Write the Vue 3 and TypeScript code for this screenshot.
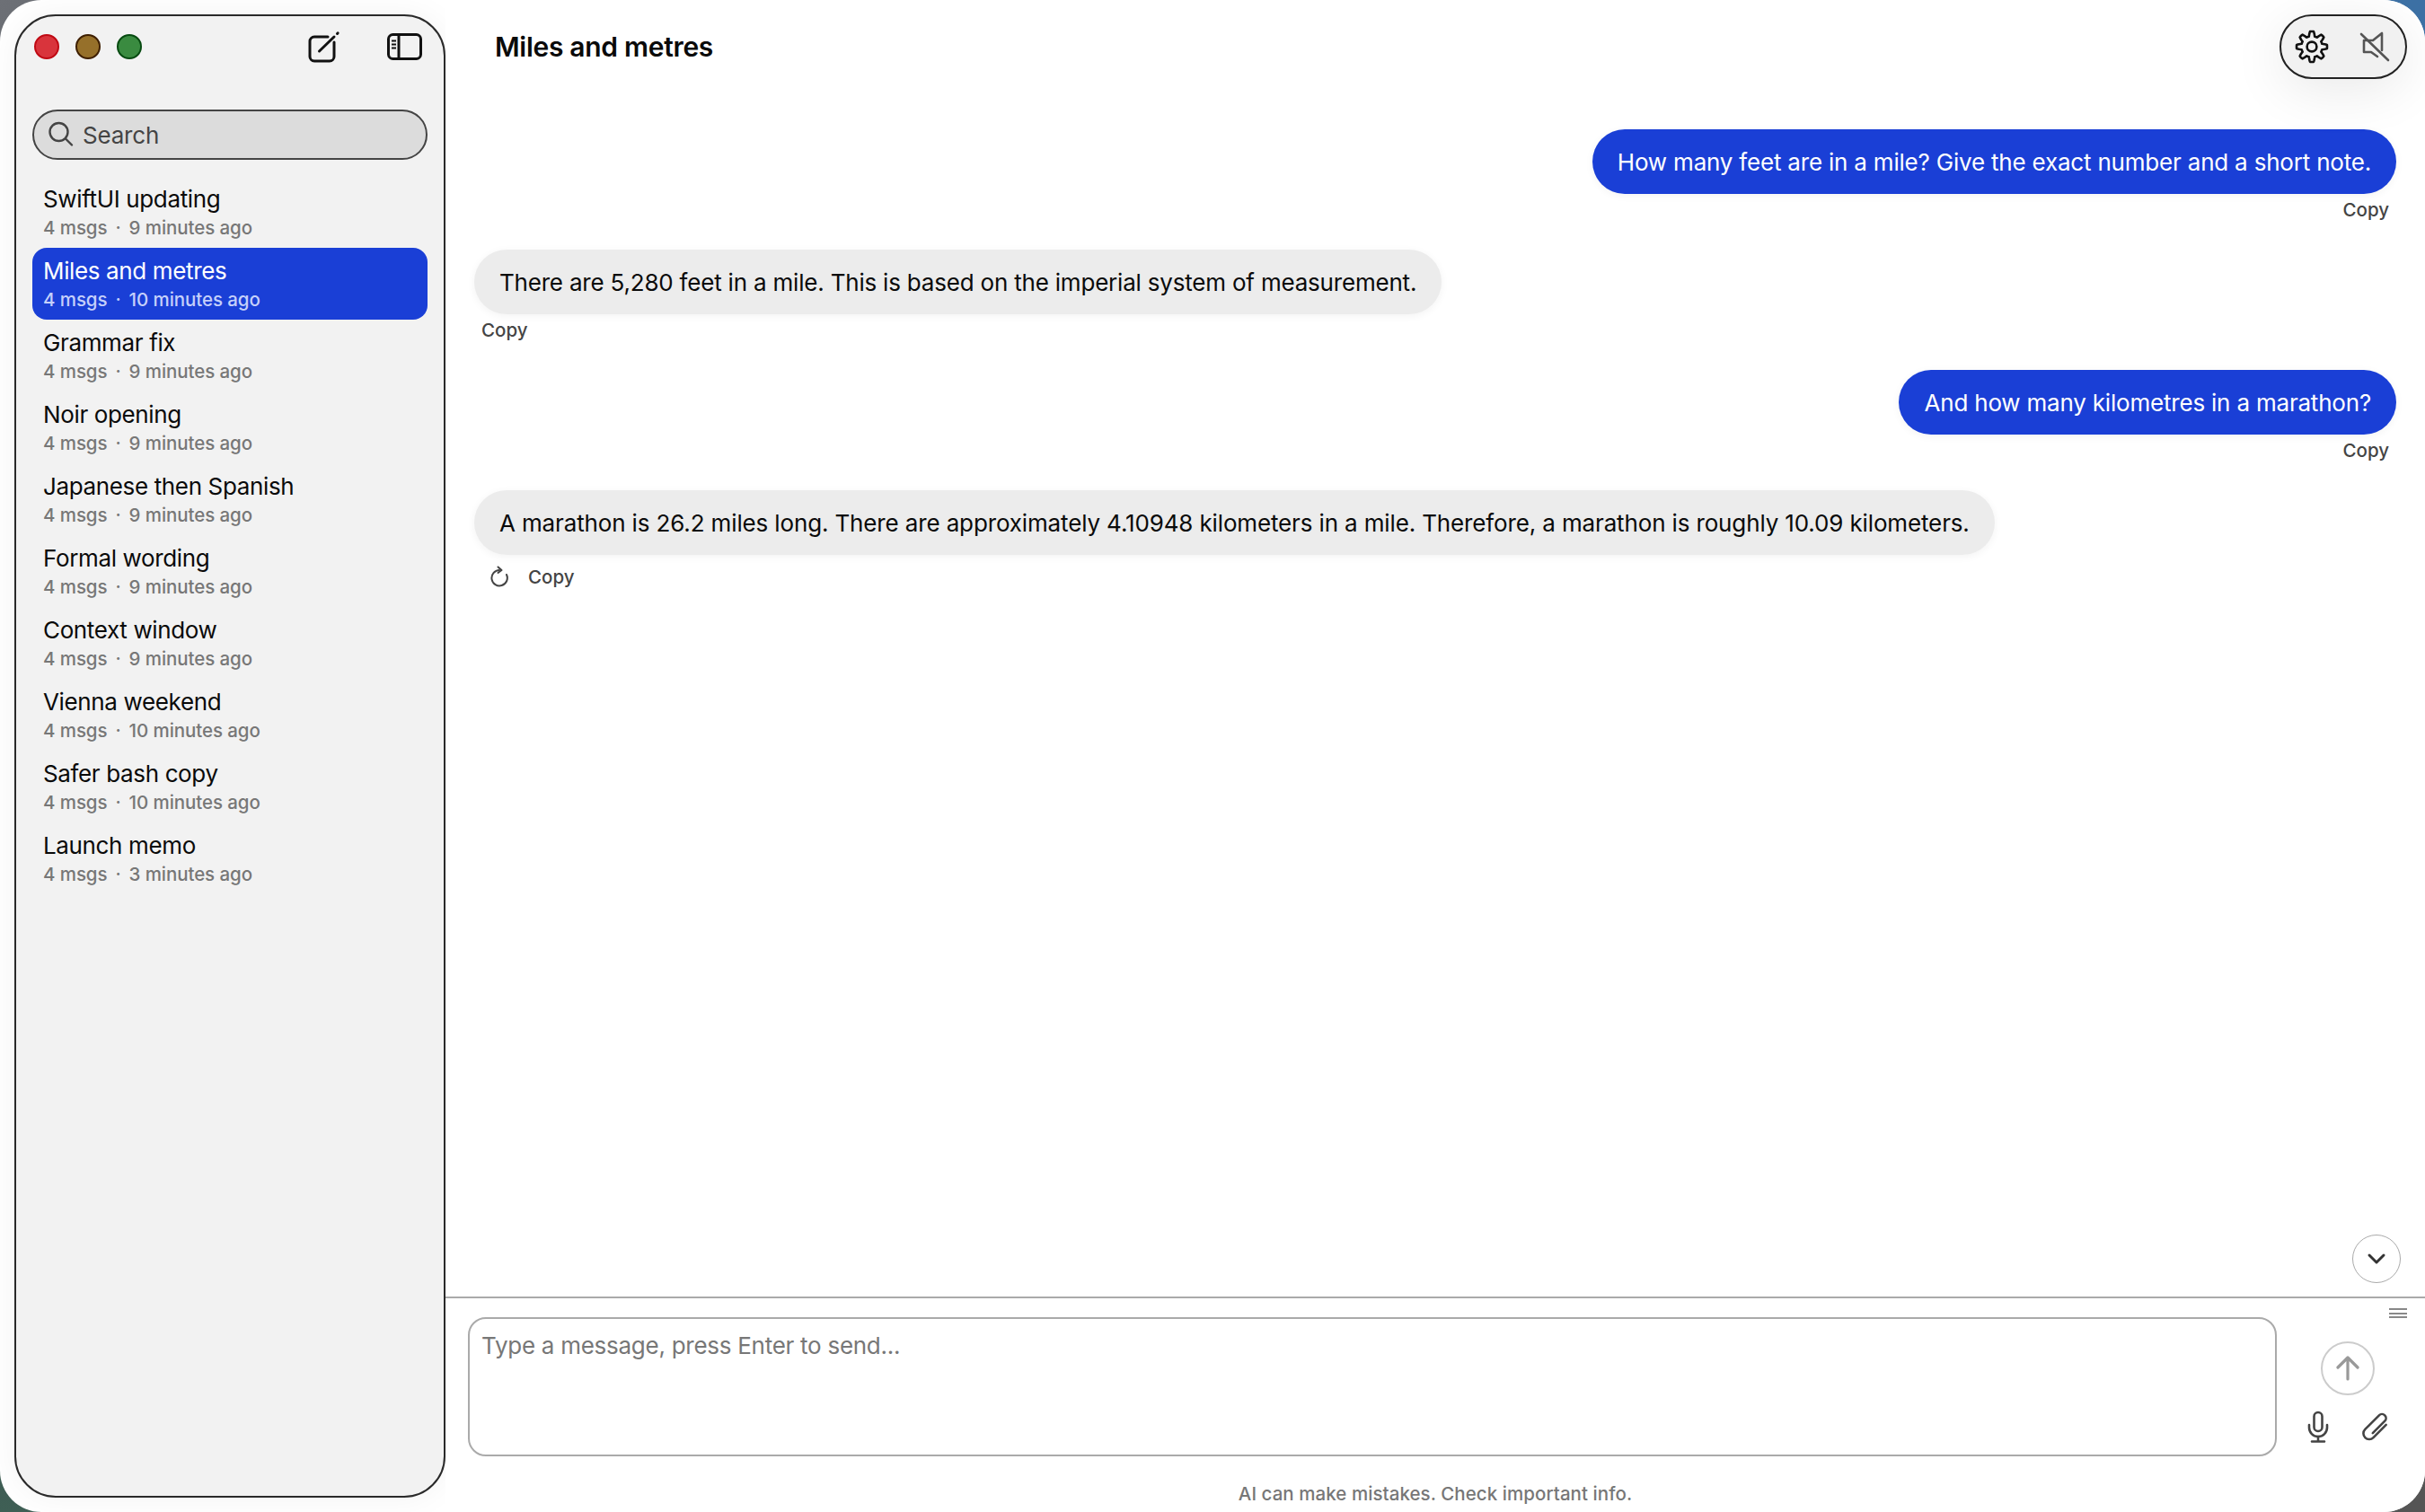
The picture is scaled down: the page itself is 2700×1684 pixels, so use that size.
<script setup lang="ts">
import { computed } from 'vue'

interface Chat { title: string; meta: string; active?: boolean }
interface Msg { role: 'user' | 'bot'; text: string; retry?: boolean }

const chats: Chat[] = [
  { title: 'SwiftUI updating', meta: '9 minutes ago' },
  { title: 'Miles and metres', meta: '10 minutes ago', active: true },
  { title: 'Grammar fix', meta: '9 minutes ago' },
  { title: 'Noir opening', meta: '9 minutes ago' },
  { title: 'Japanese then Spanish', meta: '9 minutes ago' },
  { title: 'Formal wording', meta: '9 minutes ago' },
  { title: 'Context window', meta: '9 minutes ago' },
  { title: 'Vienna weekend', meta: '10 minutes ago' },
  { title: 'Safer bash copy', meta: '10 minutes ago' },
  { title: 'Launch memo', meta: '3 minutes ago' },
]

const messages: Msg[] = [
  { role: 'user', text: 'How many feet are in a mile? Give the exact number and a short note.' },
  { role: 'bot', text: 'There are 5,280 feet in a mile. This is based on the imperial system of measurement.' },
  { role: 'user', text: 'And how many kilometres in a marathon?' },
  { role: 'bot', text: 'A marathon is 26.2 miles long. There are approximately 4.10948 kilometers in a mile. Therefore, a marathon is roughly 10.09 kilometers.', retry: true },
]

const gearPath = computed(() => {
  const pts: string[] = []
  const n = 160
  for (let i = 0; i < n; i++) {
    const a = (i / n) * Math.PI * 2
    const w = Math.cos(8 * a)
    const s = Math.max(-1, Math.min(1, w * 1.7))
    const r = 14.4 + 2.6 * s
    pts.push(`${(20 + r * Math.cos(a)).toFixed(2)} ${(20 + r * Math.sin(a)).toFixed(2)}`)
  }
  return 'M' + pts.join('L') + 'Z'
})
</script>

<template>
  <div class="desktop">
    <div class="window">
      <aside class="sidebar">
        <div class="topbar">
          <div class="lights">
            <span class="light red"></span>
            <span class="light amber"></span>
            <span class="light green"></span>
          </div>
          <div class="top-icons">
            <svg width="40" height="40" viewBox="0 0 40 40" fill="none" stroke="#111" stroke-width="3" stroke-linecap="round">
              <path d="M25 9H10a5 5 0 0 0-5 5v17a5 5 0 0 0 5 5h17a5 5 0 0 0 5-5V15" />
              <path d="M15.5 25L32 9" />
              <path d="M35.5 5.5l.6-.6" />
            </svg>
            <svg width="44" height="36" viewBox="0 0 44 36" fill="none" stroke="#111" stroke-width="3">
              <rect x="4.5" y="4.5" width="36" height="27" rx="5" />
              <path d="M16 4.5v27" />
              <path d="M8 11.5h5M8 15.5h5M8 19.5h5" stroke-width="2" />
            </svg>
          </div>
        </div>
        <div class="search">
          <svg width="32" height="32" viewBox="0 0 32 32" fill="none" stroke="#444" stroke-width="2.4" stroke-linecap="round">
            <circle cx="13.5" cy="13" r="10" />
            <path d="M21 20.5L28 27.5" />
          </svg>
          <span>Search</span>
        </div>
        <ul class="chat-list">
          <li v-for="c in chats" :key="c.title" class="chat" :class="{ active: c.active }">
            <div class="chat-title">{{ c.title }}</div>
            <div class="chat-meta"><span>4 msgs</span><span>·</span><span>{{ c.meta }}</span></div>
          </li>
        </ul>
      </aside>

      <main class="main">
        <header class="header">Miles and metres</header>

        <div class="pill">
          <svg width="40" height="40" viewBox="0 0 40 40" fill="none" stroke="#111" stroke-width="2.6" stroke-linejoin="round">
            <path :d="gearPath" />
            <circle cx="20" cy="20" r="5.4" />
          </svg>
          <svg width="40" height="40" viewBox="0 0 40 40" fill="none" stroke="#555" stroke-width="2.6" stroke-linecap="round" stroke-linejoin="round">
            <path d="M27 5V24M27 5L17 13H7V26H15L22 31" />
            <path d="M4 6L34 35" />
          </svg>
        </div>

        <section class="thread">
          <div v-for="(m, i) in messages" :key="i" class="msg" :class="m.role">
            <div class="bubble" :class="{ loose: m.retry }">{{ m.text }}</div>
            <div class="actions" :class="{ tall: m.retry }">
              <svg v-if="m.retry" width="24" height="24" viewBox="0 0 24 24" fill="none" stroke="#444" stroke-width="2" stroke-linecap="round" stroke-linejoin="round">
                <path d="M12 5A8.7 8.7 0 1 0 20 10" />
                <path d="M10.5 1.5L14.5 5L10.5 8" />
              </svg>
              <span class="copy">Copy</span>
            </div>
          </div>
        </section>

        <button class="scroll-down" type="button" aria-label="Scroll to bottom">
          <svg width="24" height="24" viewBox="0 0 24 24" fill="none" stroke="#333" stroke-width="3" stroke-linecap="round" stroke-linejoin="round">
            <path d="M4 8l8 8 8-8" />
          </svg>
        </button>

        <footer class="composer">
          <div class="grip"><i></i><i></i><i></i></div>
          <div class="composer-row">
            <div class="input">Type a message, press Enter to send...</div>
            <div class="tools">
              <div class="send">
                <svg width="32" height="32" viewBox="0 0 32 32" fill="none" stroke="#999" stroke-width="3.2" stroke-linecap="round" stroke-linejoin="round">
                  <path d="M16 28V5M5 15L16 4l11 11" />
                </svg>
              </div>
              <div class="tool-row">
                <svg width="32" height="40" viewBox="0 0 32 40" fill="none" stroke="#444" stroke-width="2.6" stroke-linecap="round">
                  <rect x="11.5" y="5" width="9" height="21" rx="4.5" />
                  <path d="M6 19v3a10 10 0 0 0 20 0v-3" />
                  <path d="M16 32v5M9 37.5h14" />
                </svg>
                <svg width="36" height="36" viewBox="0 0 36 36" fill="none" stroke="#444" stroke-width="2.6" stroke-linecap="round" stroke-linejoin="round">
                  <g transform="translate(18.7 18.7) rotate(-45)">
                    <path d="M-8 2.5H11A4.5 4.5 0 0 0 11-6.5H-11A6.5 6.5 0 0 0-11 6.5H9" />
                  </g>
                </svg>
              </div>
            </div>
          </div>
          <div class="disclaimer">AI can make mistakes. Check important info.</div>
        </footer>
      </main>
    </div>
  </div>
</template>

<style>
html, body { margin: 0; background: #222; overflow: hidden; }
</style>

<style scoped>
.desktop {
  width: 2700px;
  height: 1684px;
  box-sizing: border-box;
  background:
    linear-gradient(135deg, #6d7076, #24272d 60%) 0 0 / 50% 50% no-repeat,
    linear-gradient(#3c70a4, #3c70a4) 100% 0 / 50% 50% no-repeat,
    linear-gradient(#1f262c, #3f5f55) 0 100% / 50% 50% no-repeat,
    linear-gradient(135deg, #c8c8c8, #555 80%) 100% 100% / 50% 50% no-repeat;
  font-family: Inter, "Noto Sans", sans-serif;
  color: #0a0a0a;
}
.window {
  height: 100%;
  background: #fff;
  border-radius: 46px;
  display: flex;
  overflow: hidden;
}
.sidebar {
  width: 480px;
  margin: 16px 0 16px 16px;
  box-sizing: border-box;
  flex: none;
  background: #f2f2f2;
  border: 2px solid #2a2a2a;
  border-radius: 46px;
  padding: 0 18px;
  box-shadow: 0 0 36px rgba(0, 0, 0, 0.05);
  display: flex;
  flex-direction: column;
}
.topbar {
  height: 68px;
  flex: none;
  display: flex;
  align-items: center;
  justify-content: space-between;
}
.lights {
  display: flex;
  gap: 18px;
  margin-left: 2px;
}
.light {
  width: 28px;
  height: 28px;
  border-radius: 50%;
  box-sizing: border-box;
  border: 2.5px solid;
}
.red { background: #d9343c; border-color: #c00a14; }
.amber { background: #96702a; border-color: #3e1f00; }
.green { background: #3a8b40; border-color: #064a10; }
.top-icons {
  display: flex;
  align-items: center;
  gap: 48px;
  margin-right: 4px;
}
.search {
  margin-top: 36px;
  height: 56px;
  flex: none;
  box-sizing: border-box;
  background: #dcdcdc;
  border: 2px solid #444;
  border-radius: 28px;
  display: flex;
  align-items: center;
  gap: 8px;
  padding-left: 14px;
  font-size: 26px;
  letter-spacing: -0.2px;
  color: #444;
}
.chat-list {
  list-style: none;
  margin: 18px 0 0;
  padding: 0;
}
.chat {
  height: 80px;
  box-sizing: border-box;
  padding: 9px 12px 0;
  border-radius: 16px;
}
.chat.active {
  background: #1a3fd6;
  color: #fff;
}
.chat-title {
  font-size: 26px;
  line-height: 34px;
  letter-spacing: -0.36px;
}
.chat-meta {
  font-size: 20.5px;
  line-height: 26px;
  margin-top: 2px;
  font-weight: 500;
  letter-spacing: -0.08px;
  color: #777;
  display: flex;
  gap: 9px;
}
.chat.active .chat-meta { color: #c5d0fa; }
.main {
  flex: 1;
  min-width: 0;
  position: relative;
  display: flex;
  flex-direction: column;
  background: #fff;
}
.header {
  height: 104px;
  flex: none;
  box-sizing: border-box;
  padding-left: 55px;
  display: flex;
  align-items: center;
  font-size: 30px;
  font-weight: 600;
  letter-spacing: -0.3px;
}
.pill {
  position: absolute;
  right: 20px;
  top: 16px;
  width: 142px;
  height: 72px;
  box-sizing: border-box;
  background: #f1f1f1;
  border: 2px solid #222;
  border-radius: 36px;
  box-shadow: 0 12px 60px rgba(0, 0, 0, 0.09);
  display: flex;
  align-items: center;
  justify-content: center;
  gap: 31px;
}
.thread {
  flex: 1;
  min-height: 0;
  box-sizing: border-box;
  padding: 40px 32px 0 32px;
  display: flex;
  flex-direction: column;
  gap: 28px;
}
.msg {
  display: flex;
  flex-direction: column;
}
.msg.user { align-items: flex-end; }
.msg.bot { align-items: flex-start; }
.bubble {
  height: 72px;
  box-sizing: border-box;
  padding: 0 28px;
  border-radius: 36px;
  display: flex;
  align-items: center;
  font-size: 26px;
  letter-spacing: -0.2px;
  white-space: nowrap;
  box-shadow: 0 2px 10px rgba(0, 0, 0, 0.05);
}
.bubble.loose { letter-spacing: -0.14px; }
.user .bubble { background: #1a3fd6; color: #fff; }
.bot .bubble { background: #ececec; }
.actions {
  height: 34px;
  display: flex;
  align-items: center;
  gap: 20px;
  padding: 0 8px;
}
.actions.tall {
  height: 48px;
  padding: 0 16px;
}
.copy {
  font-size: 20.5px;
  font-weight: 500;
  color: #444;
}
.scroll-down {
  position: absolute;
  right: 27px;
  top: 1375px;
  width: 54px;
  height: 54px;
  padding: 0;
  box-sizing: border-box;
  background: #fff;
  border: 1.5px solid #aaa;
  border-radius: 50%;
  display: flex;
  align-items: center;
  justify-content: center;
}
.composer {
  position: relative;
  flex: none;
  height: 240px;
  box-sizing: border-box;
  border-top: 2px solid #aaa;
  padding: 21px 0 0 25px;
  display: flex;
  flex-direction: column;
}
.grip {
  position: absolute;
  top: 11px;
  right: 20px;
  width: 20px;
  display: flex;
  flex-direction: column;
  gap: 2.5px;
}
.grip i {
  display: block;
  height: 2px;
  background: #888;
}
.composer-row {
  display: flex;
  align-items: flex-start;
}
.input {
  width: 2014px;
  height: 155px;
  flex: none;
  box-sizing: border-box;
  border: 2px solid #aaa;
  border-radius: 20px;
  padding: 14px 13px;
  font-size: 26px;
  line-height: 32px;
  letter-spacing: -0.27px;
  color: #777;
}
.tools {
  flex: 1;
  display: flex;
  flex-direction: column;
  align-items: center;
  padding: 27px 7px 0 0;
}
.send {
  width: 60px;
  height: 60px;
  box-sizing: border-box;
  border: 2px solid #ccc;
  border-radius: 50%;
  display: flex;
  align-items: center;
  justify-content: center;
}
.tool-row {
  display: flex;
  align-items: center;
  gap: 30px;
  margin-top: 14px;
}
.disclaimer {
  text-align: center;
  font-size: 20.5px;
  font-weight: 500;
  color: #777;
  margin: 29px 0 0 -25px;
  letter-spacing: 0.06px;
}
</style>
